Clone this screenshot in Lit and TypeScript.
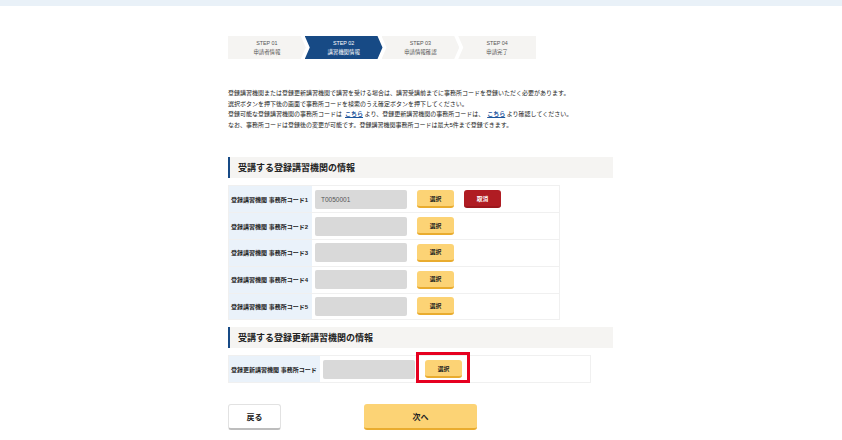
import { LitElement, html, css, TemplateResult, nothing } from "lit";
import { customElement } from "lit/decorators.js";

const STEPS = [
  { no: "STEP 01", label: "申請者情報" },
  { no: "STEP 02", label: "講習機関情報", active: true },
  { no: "STEP 03", label: "申請情報確認" },
  { no: "STEP 04", label: "申請完了" },
];

@customElement("app-root")
export class AppRoot extends LitElement {
  static styles = css`
    :host {
      display: block;
      min-height: 440px;
      background: #fff;
      color: #222;
      font-family: "Liberation Sans", "Noto Sans CJK JP", sans-serif;
    }

    .topbar {
      height: 6px;
      background: #e9f1f8;
    }

    .page {
      width: 385px;
      margin-left: 228px;
      padding-top: 30px;
    }

    .steps {
      display: flex;
      width: 307px;
      height: 23px;
    }

    .step {
      flex: 1;
      margin-right: -1px;
      display: flex;
      flex-direction: column;
      align-items: center;
      justify-content: center;
      gap: 3px;
      background: #f5f4f2;
      color: #555;
      font-size: 5.4px;
      line-height: 6px;
      clip-path: polygon(0 0, calc(100% - 5px) 0, 100% 50%, calc(100% - 5px) 100%, 0 100%, 5px 50%);
    }

    .step:first-child {
      clip-path: polygon(0 0, calc(100% - 5px) 0, 100% 50%, calc(100% - 5px) 100%, 0 100%);
    }

    .step:last-child {
      clip-path: polygon(0 0, 100% 0, 100% 100%, 0 100%, 5px 50%);
    }

    .step.active {
      background: #174a85;
      color: #fff;
    }

    .intro {
      margin: 29px 0 0;
      width: 360px;
      font-size: 6px;
      line-height: 10.6px;
      white-space: nowrap;
    }

    .intro a {
      color: #1c559c;
      font-weight: bold;
      text-decoration: underline;
      margin: 0 1.5px 0 3px;
    }

    h2 {
      margin: 0;
      height: 21px;
      display: flex;
      align-items: center;
      padding-left: 8px;
      background: #f5f4f2;
      border-left: 2px solid #174a85;
      font-size: 9px;
      font-weight: bold;
    }

    .first {
      margin-top: 27px;
    }

    .table {
      box-sizing: border-box;
      width: 332px;
      margin-top: 7px;
      border: 1px solid #f0f0f0;
      border-top: 0;
    }

    .row {
      box-sizing: border-box;
      height: 26.8px;
      display: flex;
      border-top: 1px solid #f0f0f0;
    }

    .label {
      box-sizing: border-box;
      flex: 0 0 83px;
      display: flex;
      align-items: center;
      padding-left: 2px;
      background: #eaf2fa;
      font-size: 6px;
      font-weight: bold;
      white-space: nowrap;
    }

    .cell {
      flex: 1;
      display: flex;
      align-items: center;
      gap: 10px;
      padding-left: 3px;
    }

    .wide {
      width: 363px;
    }

    .wide .row {
      height: 27px;
    }

    .wide .label {
      flex-basis: 91px;
    }

    .field {
      box-sizing: border-box;
      width: 92px;
      height: 19px;
      padding-left: 6px;
      display: flex;
      align-items: center;
      background: #d9d9d9;
      border-radius: 2px;
      color: #555;
      font-size: 6.5px;
    }

    .btn {
      box-sizing: border-box;
      width: 37px;
      height: 18px;
      display: flex;
      align-items: center;
      justify-content: center;
      background: #fcd375;
      border-bottom: 2px solid #e9ac2f;
      border-radius: 3px;
      font-size: 5.8px;
      font-weight: bold;
    }

    .btn.cancel {
      background: #b01c23;
      border-bottom-color: #9c171d;
      color: #fff;
    }

    .marked {
      position: relative;
    }

    .marked::after {
      content: "";
      position: absolute;
      left: -9px;
      right: -8px;
      top: -8px;
      bottom: -7px;
      border: 3px solid #e60020;
    }

    .second {
      margin-top: 7px;
    }

    .actions {
      display: flex;
      gap: 83px;
      margin-top: 21px;
    }

    .action {
      box-sizing: border-box;
      height: 26px;
      display: flex;
      align-items: center;
      justify-content: center;
      border-radius: 3px;
      font-size: 8px;
      font-weight: bold;
    }

    .back {
      width: 53px;
      background: #fff;
      border: 1px solid #e2e2e2;
      border-bottom: 2px solid #bdbdbd;
    }

    .next {
      width: 113px;
      background: #fcd375;
      border-bottom: 2px solid #e9ac2f;
    }
  `;

  private renderRow(n: number, value = ""): TemplateResult {
    return html`
      <div class="row">
        <div class="label">登録講習機関 事務所コード${n}</div>
        <div class="cell">
          <div class="field">${value}</div>
          <div class="btn">選択</div>
          ${value ? html`<div class="btn cancel">取消</div>` : nothing}
        </div>
      </div>
    `;
  }

  protected render(): TemplateResult {
    return html`
      <div class="topbar"></div>
      <div class="page">
        <div class="steps">
          ${STEPS.map(
            (s) => html`
              <div class="step ${s.active ? "active" : ""}">
                <span>${s.no}</span>
                <span>${s.label}</span>
              </div>
            `
          )}
        </div>

        <p class="intro">
          登録講習機関または登録更新講習機関で講習を受ける場合は、講習受講前までに事務所コードを登録いただく必要があります。<br />
          選択ボタンを押下後の画面で事務所コードを検索のうえ確定ボタンを押下してください。<br />
          登録可能な登録講習機関の事務所コードは<a>こちら</a>より、登録更新講習機関の事務所コードは、<a>こちら</a>より確認してください。<br />
          なお、事務所コードは登録後の変更が可能です。登録講習機関事務所コードは最大5件まで登録できます。
        </p>

        <h2 class="first">受講する登録講習機関の情報</h2>
        <div class="table">
          ${this.renderRow(1, "T0050001")} ${this.renderRow(2)} ${this.renderRow(3)}
          ${this.renderRow(4)} ${this.renderRow(5)}
        </div>

        <h2 class="second">受講する登録更新講習機関の情報</h2>
        <div class="table wide">
          <div class="row">
            <div class="label">登録更新講習機関 事務所コード</div>
            <div class="cell">
              <div class="field"></div>
              <div class="btn marked">選択</div>
            </div>
          </div>
        </div>

        <div class="actions">
          <div class="action back">戻る</div>
          <div class="action next">次へ</div>
        </div>
      </div>
    `;
  }
}

declare global {
  interface HTMLElementTagNameMap {
    "app-root": AppRoot;
  }
}
